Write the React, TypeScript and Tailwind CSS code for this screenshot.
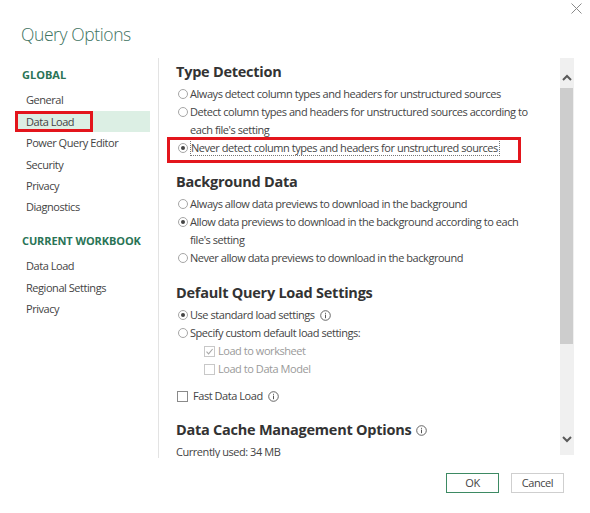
import React from 'react';

const font = { fontFamily: '"Open Sans", "Noto Sans", sans-serif' };

function Radio({ checked }: { checked?: boolean }) {
  return (
    <span className="mt-[4px] ml-[2px] mr-[2px] flex h-[10px] w-[10px] shrink-0 items-center justify-center rounded-full border border-[#a6a6a6] bg-white">
      {checked && <span className="h-[4px] w-[4px] rounded-full bg-[#444]" />}
    </span>
  );
}

function Check({ checked, disabled }: { checked?: boolean; disabled?: boolean }) {
  return (
    <span
      className={
        'flex h-[11px] w-[11px] shrink-0 items-center justify-center border bg-white ' +
        (disabled ? 'border-[#c8c8c8]' : 'border-[#8a8a8a]')
      }
    >
      {checked && (
        <svg width="9" height="9" viewBox="0 0 9 9">
          <path d="M1.5 4.6 L3.6 6.8 L7.6 2" fill="none" stroke="#a8a8a8" strokeWidth="1.1" />
        </svg>
      )}
    </span>
  );
}

function Info() {
  return (
    <svg width="11" height="11" viewBox="0 0 11 11" className="ml-[5px] shrink-0">
      <circle cx="5.5" cy="5.5" r="4.8" fill="none" stroke="#555" strokeWidth="0.9" />
      <rect x="5" y="4.6" width="1" height="3.6" fill="#555" />
      <rect x="5" y="2.8" width="1" height="1" fill="#555" />
    </svg>
  );
}

function Option({ checked, children }: { checked?: boolean; children: React.ReactNode }) {
  return (
    <div className="flex items-start leading-[18px]">
      <Radio checked={checked} />
      <div>{children}</div>
    </div>
  );
}

function Heading({ children, className = '' }: { children: React.ReactNode; className?: string }) {
  return (
    <div
      className={
        'flex items-center text-[14.5px] font-bold leading-[22px] tracking-[-0.25px] text-[#333] ' + className
      }
    >
      {children}
    </div>
  );
}

const navGlobal = ['General', 'Data Load', 'Power Query Editor', 'Security', 'Privacy', 'Diagnostics'];
const navWorkbook = ['Data Load', 'Regional Settings', 'Privacy'];

export default function App() {
  return (
    <div
      className="relative flex h-[513px] w-[590px] flex-col bg-white text-[11px] tracking-[-0.45px] text-[#444]"
      style={font}
    >
      <svg width="11" height="11" viewBox="0 0 11 11" className="absolute right-[8px] top-[3px]">
        <path d="M0.5 0.5 L10.5 10.5 M10.5 0.5 L0.5 10.5" stroke="#8a8a8a" strokeWidth="1" />
      </svg>

      <div className="h-[58px] pl-[21px] pt-[21px] text-[17.5px] font-light leading-[26px] tracking-[-0.4px] text-[#40735f]">
        Query Options
      </div>

      <div className="flex h-[400px]">
        {/* left nav */}
        <div className="w-[159px] shrink-0 border-r border-[#e3e3e3] pt-[6px]">
          <div className="pl-[22px] text-[11px] font-bold leading-[22px] tracking-[0px] text-[#2a7456]">GLOBAL</div>
          <div className="mt-[3.3px]">
            {navGlobal.map((n, i) => (
              <div
                key={n + i}
                className={
                  'relative ml-[17px] w-[133px] pl-[9px] leading-[21.4px] ' + (i === 1 ? 'bg-[#dcefe4]' : '')
                }
              >
                {n}
                {i === 1 && (
                  <span className="absolute left-[-2px] top-0 h-[21px] w-[78px] border-[3px] border-[#e3151c]" />
                )}
              </div>
            ))}
          </div>
          <div className="mt-[12.3px] pl-[22px] text-[11px] font-bold leading-[22px] tracking-[-0.1px] text-[#2a7456]">
            CURRENT WORKBOOK
          </div>
          <div className="mt-[3.3px]">
            {navWorkbook.map((n, i) => (
              <div key={n + i} className="ml-[17px] w-[133px] pl-[9px] leading-[21.4px]">
                {n}
              </div>
            ))}
          </div>
        </div>

        {/* right content */}
        <div className="flex flex-1">
          <div className="flex-1 overflow-hidden pl-[17px] pt-[3px]">
            <Heading>Type Detection</Heading>
            <div className="mt-[2px]">
              <Option>Always detect column types and headers for unstructured sources</Option>
              <Option>
                Detect column types and headers for unstructured sources according to
                <br />
                each file's setting
              </Option>
              <div className="relative">
                <span className="absolute left-[-9px] top-[-2px] h-[26px] w-[354px] border-[3px] border-[#e3151c]" />
                <Option checked>
                  <span className="border border-dotted border-[#777] pr-[1px]">
                    Never detect column types and headers for unstructured sources
                  </span>
                </Option>
              </div>
            </div>

            <Heading className="mt-[14px]">Background Data</Heading>
            <div className="mt-[2px]">
              <Option>Always allow data previews to download in the background</Option>
              <Option checked>
                Allow data previews to download in the background according to each
                <br />
                file's setting
              </Option>
              <Option>Never allow data previews to download in the background</Option>
            </div>

            <Heading className="mt-[15px]">Default Query Load Settings</Heading>
            <div className="mt-[2px]">
              <Option checked>
                <span className="flex items-center">
                  Use standard load settings
                  <Info />
                </span>
              </Option>
              <Option>Specify custom default load settings:</Option>
              <div className="flex h-[18px] items-center pl-[28px] text-[#9a9a9a]">
                <Check checked disabled />
                <span className="ml-[3px]">Load to worksheet</span>
              </div>
              <div className="flex h-[18px] items-center pl-[28px] text-[#9a9a9a]">
                <Check disabled />
                <span className="ml-[3px]">Load to Data Model</span>
              </div>
            </div>

            <div className="mt-[9px] flex h-[18px] items-center pl-[1px]">
              <Check />
              <span className="ml-[5px]">Fast Data Load</span>
              <Info />
            </div>

            <Heading className="mt-[14px]">
              Data Cache Management Options
              <Info />
            </Heading>
            <div className="mt-[4px] leading-[13px]">Currently used: 34 MB</div>
          </div>

          {/* scrollbar */}
          <div className="mr-[16px] flex h-[397px] w-[14px] flex-col items-center bg-[#f0f0f0]">
            <div className="flex h-[30px] w-full items-center justify-center pt-[8px]">
              <svg width="10" height="7" viewBox="0 0 10 7">
                <path d="M1 6 L5 2 L9 6" fill="none" stroke="#5a5a5a" strokeWidth="2" />
              </svg>
            </div>
            <div className="h-[256px] w-[13px] self-start bg-[#cdcdcd]" />
            <div className="flex flex-1 items-end justify-center pb-[12px]">
              <svg width="10" height="7" viewBox="0 0 10 7">
                <path d="M1 1 L5 5 L9 1" fill="none" stroke="#5a5a5a" strokeWidth="2" />
              </svg>
            </div>
          </div>
        </div>
      </div>

      <div className="flex justify-end gap-[12px] pr-[26px] pt-[15px]">
        <button className="h-[20px] w-[53px] border border-[#3d8a63] bg-white text-[11px] leading-[18px] text-[#444]">
          OK
        </button>
        <button className="h-[20px] w-[53px] border border-[#cfcfcf] bg-white text-[11px] leading-[18px] text-[#444]">
          Cancel
        </button>
      </div>
    </div>
  );
}
